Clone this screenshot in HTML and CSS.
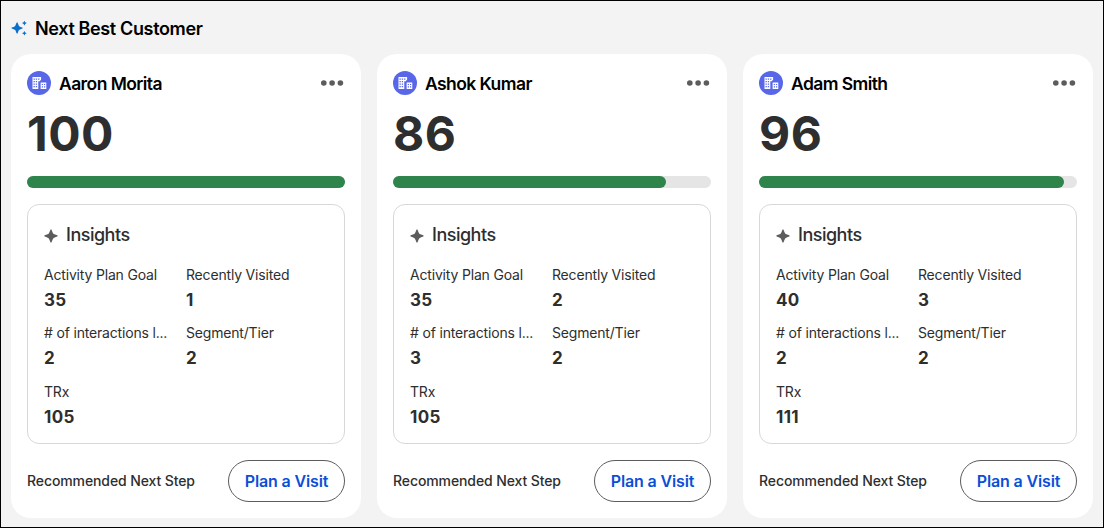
FILE: index.html
```
<!DOCTYPE html>
<html lang="en">
<head>
    <meta charset="UTF-8">
    <meta name="viewport" content="width=device-width, initial-scale=1.0">
    <title>Next Best Customer</title>
    <link rel="stylesheet" href="styles.css">
</head>
<body>
    <!-- shared icons -->
    <svg class="icon-defs" width="0" height="0">
        <symbol id="icon-star" viewBox="0 0 14 14">
            <path d="M7 0.3C7.8 0.3 8.2 3.4 9.2 4.6C10.4 5.8 13.7 6.2 13.7 7C13.7 7.8 10.4 8.2 9.2 9.4C8.2 10.6 7.8 13.7 7 13.7C6.2 13.7 5.8 10.6 4.8 9.4C3.6 8.2 0.3 7.8 0.3 7C0.3 6.2 3.6 5.8 4.8 4.6C5.8 3.4 6.2 0.3 7 0.3Z"/>
        </symbol>
        <symbol id="icon-account" viewBox="0 0 24 24">
            <circle cx="12" cy="12" r="12" fill="#5867e8"/>
            <path fill="#fff" d="M5.5 6h8.6v3.2h-1V18H5.5zM13.7 11.6h5.6V18h-5.6z"/>
            <path fill="#5867e8" d="M6.5 7.4h1.3v1.3H6.5zM8.8 7.4h1.3v1.3H8.8zM11.1 7.4h1.3v1.3h-1.3zM6.5 9.9h1.3v1.3H6.5zM8.8 9.9h1.3v1.3H8.8zM6.5 12.4h1.3v1.3H6.5zM8.8 12.4h1.3v1.3H8.8zM6.5 14.9h1.3v1.3H6.5zM8.8 14.9h1.3v1.3H8.8zM11.3 10.2h2.6v1.4h-.9V18h-1.7zM14.8 12.9h1.2v1.2h-1.2zM17 12.9h1.2v1.2H17zM14.8 15.3h1.2v1.2h-1.2zM17 15.3h1.2v1.2H17z"/>
        </symbol>
        <symbol id="icon-more" viewBox="0 0 24 8">
            <circle cx="3.8" cy="4" r="2.8"/>
            <circle cx="12.1" cy="4" r="2.8"/>
            <circle cx="20.4" cy="4" r="2.8"/>
        </symbol>
    </svg>

    <main class="panel">
        <header class="panel-header">
            <svg class="sparkle" viewBox="0 0 16 16">
                <path d="M6.1 2.3C6.9 2.3 7.2 4.9 8 5.9C9 6.9 11.8 7.3 11.8 8C11.8 8.7 9 9.1 8 10.1C7.2 11.1 6.9 13.7 6.1 13.7C5.3 13.7 5 11.1 4.2 10.1C3.2 9.1 0.4 8.7 0.4 8C0.4 7.3 3.2 6.9 4.2 5.9C5 4.9 5.3 2.3 6.1 2.3Z"/>
                <path d="M13.4 0.8L14.2 2.3L15.8 3.1L14.2 3.9L13.4 5.4L12.6 3.9L11 3.1L12.6 2.3Z"/>
                <path d="M13.4 10.9L14.2 12.4L15.8 13.2L14.2 14L13.4 15.5L12.6 14L11 13.2L12.6 12.4Z"/>
            </svg>
            <h1 class="panel-title">Next Best Customer</h1>
        </header>

        <section class="cards">
            <article class="card">
                <div class="card-header">
                    <svg class="account"><use href="#icon-account"/></svg>
                    <h2 class="name">Aaron Morita</h2>
                    <svg class="more"><use href="#icon-more"/></svg>
                </div>
                <div class="score">100</div>
                <div class="progress"><div class="progress-bar" style="width: 100%"></div></div>
                <div class="insights">
                    <div class="insights-header">
                        <svg class="star"><use href="#icon-star"/></svg>
                        <h3 class="insights-title">Insights</h3>
                    </div>
                    <dl class="metrics">
                        <div class="metric"><dt>Activity Plan Goal</dt><dd>35</dd></div>
                        <div class="metric"><dt>Recently Visited</dt><dd>1</dd></div>
                        <div class="metric"><dt># of interactions l...</dt><dd>2</dd></div>
                        <div class="metric"><dt>Segment/Tier</dt><dd>2</dd></div>
                        <div class="metric"><dt>TRx</dt><dd>105</dd></div>
                    </dl>
                </div>
                <div class="card-footer">
                    <span class="next-step">Recommended Next Step</span>
                    <button class="plan-button">Plan a Visit</button>
                </div>
            </article>

            <article class="card">
                <div class="card-header">
                    <svg class="account"><use href="#icon-account"/></svg>
                    <h2 class="name">Ashok Kumar</h2>
                    <svg class="more"><use href="#icon-more"/></svg>
                </div>
                <div class="score">86</div>
                <div class="progress"><div class="progress-bar" style="width: 86%"></div></div>
                <div class="insights">
                    <div class="insights-header">
                        <svg class="star"><use href="#icon-star"/></svg>
                        <h3 class="insights-title">Insights</h3>
                    </div>
                    <dl class="metrics">
                        <div class="metric"><dt>Activity Plan Goal</dt><dd>35</dd></div>
                        <div class="metric"><dt>Recently Visited</dt><dd>2</dd></div>
                        <div class="metric"><dt># of interactions l...</dt><dd>3</dd></div>
                        <div class="metric"><dt>Segment/Tier</dt><dd>2</dd></div>
                        <div class="metric"><dt>TRx</dt><dd>105</dd></div>
                    </dl>
                </div>
                <div class="card-footer">
                    <span class="next-step">Recommended Next Step</span>
                    <button class="plan-button">Plan a Visit</button>
                </div>
            </article>

            <article class="card">
                <div class="card-header">
                    <svg class="account"><use href="#icon-account"/></svg>
                    <h2 class="name">Adam Smith</h2>
                    <svg class="more"><use href="#icon-more"/></svg>
                </div>
                <div class="score">96</div>
                <div class="progress"><div class="progress-bar" style="width: 96%"></div></div>
                <div class="insights">
                    <div class="insights-header">
                        <svg class="star"><use href="#icon-star"/></svg>
                        <h3 class="insights-title">Insights</h3>
                    </div>
                    <dl class="metrics">
                        <div class="metric"><dt>Activity Plan Goal</dt><dd>40</dd></div>
                        <div class="metric"><dt>Recently Visited</dt><dd>3</dd></div>
                        <div class="metric"><dt># of interactions l...</dt><dd>2</dd></div>
                        <div class="metric"><dt>Segment/Tier</dt><dd>2</dd></div>
                        <div class="metric"><dt>TRx</dt><dd>111</dd></div>
                    </dl>
                </div>
                <div class="card-footer">
                    <span class="next-step">Recommended Next Step</span>
                    <button class="plan-button">Plan a Visit</button>
                </div>
            </article>
        </section>
    </main>
</body>
</html>
```
FILE: styles.css
```
* {
    box-sizing: border-box;
}

body {
    margin: 0;
    background-color: #f3f3f3;
    font-family: Inter, "Liberation Sans", sans-serif;
    color: #2e2e2e;
}

h1, h2, h3, dl, dd {
    margin: 0;
}

.icon-defs {
    display: block;
}

.panel {
    height: 528px;
    padding: 14px 10px 0;
    border: 1px solid #000;
    overflow: hidden;
}

.panel-header {
    display: flex;
    align-items: center;
    gap: 8px;
    height: 26px;
    margin-bottom: 13px;
}

.sparkle {
    width: 16px;
    height: 16px;
    fill: #0b6fcb;
}

.panel-title {
    font-size: 18px;
    font-weight: 600;
    letter-spacing: -0.36px;
    color: #000;
}

.cards {
    display: grid;
    grid-template-columns: repeat(3, 350px);
    gap: 16px;
}

.card {
    height: 464px;
    padding: 16px;
    background-color: #fff;
    border-radius: 20px;
}

.card-header {
    display: flex;
    align-items: center;
    height: 26px;
}

.account {
    width: 24px;
    height: 24px;
}

.name {
    flex: 1;
    margin-left: 8px;
    font-size: 17.5px;
    font-weight: 600;
    letter-spacing: -0.58px;
    color: #000;
}

.more {
    width: 24px;
    height: 8px;
    margin-right: 1px;
    fill: #5c5c5c;
}

.score {
    height: 60px;
    margin-top: 8px;
    font-size: 48px;
    font-weight: 700;
    line-height: 60px;
    letter-spacing: 0.5px;
}

.progress {
    height: 12px;
    margin-top: 12px;
    border-radius: 6px;
    background-color: #e5e5e5;
}

.progress-bar {
    height: 12px;
    border-radius: 6px;
    background-color: #2e844a;
}

.insights {
    height: 240px;
    margin-top: 16px;
    padding: 16px;
    border: 1px solid #d8d8d8;
    border-radius: 12px;
}

.insights-header {
    display: flex;
    align-items: center;
    gap: 8px;
    height: 26px;
}

.star {
    width: 14px;
    height: 14px;
    margin-top: 4px;
    fill: #5c5c5c;
}

.insights-title {
    font-size: 18px;
    font-weight: 500;
    letter-spacing: -0.5px;
}

.metrics {
    display: grid;
    grid-template-columns: 126px 126px;
    grid-auto-rows: 58.4px;
    column-gap: 16px;
    margin-top: 18px;
}

.metric dt {
    height: 20px;
    font-size: 14px;
    line-height: 20px;
    letter-spacing: -0.18px;
    white-space: nowrap;
}

.metric dd {
    margin-top: 4px;
    font-size: 17px;
    font-weight: 700;
    line-height: 22px;
    letter-spacing: 0.3px;
}

.card-footer {
    display: flex;
    align-items: center;
    justify-content: space-between;
    margin-top: 16px;
}

.next-step {
    padding-bottom: 2px;
    font-size: 14px;
    font-weight: 500;
    letter-spacing: -0.1px;
}

.plan-button {
    width: 117px;
    height: 42px;
    padding: 0;
    border: 1px solid #5c5c5c;
    border-radius: 21px;
    background-color: #fff;
    color: #0b4fd8;
    font-family: inherit;
    font-size: 16px;
    font-weight: 600;
    letter-spacing: -0.15px;
}
```
